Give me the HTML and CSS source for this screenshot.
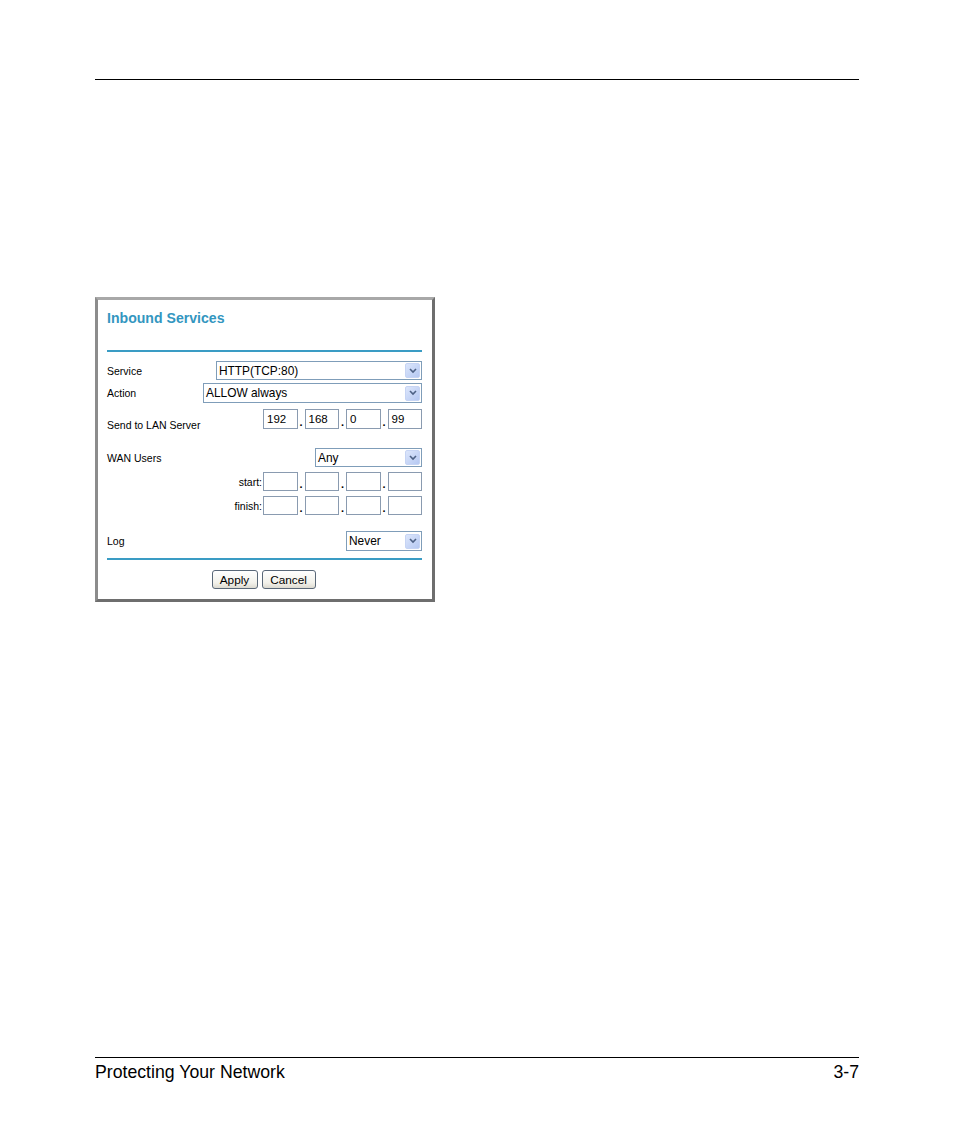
FILE: index.html
```html
<!DOCTYPE html>
<html>
<head>
<meta charset="utf-8">
<link rel="stylesheet" href="styles.css">
</head>
<body>
<div class="page">
  <div class="top-rule"></div>
  <div class="figure">
    <div class="frame">
      <div class="title">Inbound Services</div>
      <div class="rule rule-top"></div>

      <div class="row r-service">
        <span class="label">Service</span>
        <div class="select w-service"><span>HTTP(TCP:80)</span><i class="arrow"><svg viewBox="0 0 8 6" width="8" height="6"><path d="M1 1 L4 4 L7 1" fill="none" stroke="#4d6185" stroke-width="1.6"/></svg></i></div>
      </div>
      <div class="row r-action">
        <span class="label">Action</span>
        <div class="select w-action"><span>ALLOW always</span><i class="arrow"><svg viewBox="0 0 8 6" width="8" height="6"><path d="M1 1 L4 4 L7 1" fill="none" stroke="#4d6185" stroke-width="1.6"/></svg></i></div>
      </div>
      <div class="row r-lan">
        <span class="label label-low">Send to LAN Server</span>
        <div class="ip">
          <span class="oct">192</span><span class="dot">.</span><span class="oct">168</span><span class="dot">.</span><span class="oct">0</span><span class="dot">.</span><span class="oct">99</span>
        </div>
      </div>
      <div class="row r-wan">
        <span class="label">WAN Users</span>
        <div class="select w-wan"><span>Any</span><i class="arrow"><svg viewBox="0 0 8 6" width="8" height="6"><path d="M1 1 L4 4 L7 1" fill="none" stroke="#4d6185" stroke-width="1.6"/></svg></i></div>
      </div>
      <div class="row r-start">
        <span class="sublabel">start:</span>
        <div class="ip">
          <span class="oct"></span><span class="dot">.</span><span class="oct"></span><span class="dot">.</span><span class="oct"></span><span class="dot">.</span><span class="oct"></span>
        </div>
      </div>
      <div class="row r-finish">
        <span class="sublabel">finish:</span>
        <div class="ip">
          <span class="oct"></span><span class="dot">.</span><span class="oct"></span><span class="dot">.</span><span class="oct"></span><span class="dot">.</span><span class="oct"></span>
        </div>
      </div>
      <div class="row r-log">
        <span class="label">Log</span>
        <div class="select w-log"><span>Never</span><i class="arrow"><svg viewBox="0 0 8 6" width="8" height="6"><path d="M1 1 L4 4 L7 1" fill="none" stroke="#4d6185" stroke-width="1.6"/></svg></i></div>
      </div>
      <div class="rule rule-bottom"></div>
      <div class="buttons">
        <span class="btn b-apply">Apply</span>
        <span class="btn b-cancel">Cancel</span>
      </div>
    </div>
  </div>
  <div class="spacer"></div>
  <div class="footer">
    <span>Protecting Your Network</span>
    <span>3-7</span>
  </div>
</div>
</body>
</html>
```

FILE: styles.css
```css
html, body {
  margin: 0;
  padding: 0;
  background: #fff;
}
body {
  width: 954px;
  height: 1145px;
  overflow: hidden;
  font-family: "Liberation Sans", Arial, sans-serif;
  color: #000;
}
.page {
  width: 764px;
  margin-left: 95px;
  height: 1145px;
  display: flex;
  flex-direction: column;
}
.top-rule {
  margin-top: 79px;
  height: 0;
  border-top: 1px solid #000;
}
.figure {
  margin-top: 217px;
}
.frame {
  box-sizing: border-box;
  width: 340px;
  height: 305px;
  border-style: solid;
  border-width: 3px;
  border-color: #a8a8a8 #6e6e6e #6e6e6e #8c8c8c;
  background: #fff;
  padding: 0 10px 0 9px;
  display: flex;
  flex-direction: column;
  font-size: 10.5px;
}
.title {
  margin-top: 10px;
  height: 16px;
  line-height: 16px;
  font-size: 14.1px;
  font-weight: bold;
  color: #3396bf;
}
.rule {
  height: 2px;
  background: #3a9cc4;
}
.rule-top { margin-top: 24px; }
.rule-bottom { margin-top: 7px; }

.row {
  display: flex;
  justify-content: space-between;
  align-items: center;
}
.label { white-space: nowrap; }
.label-low { align-self: flex-end; line-height: 12px; margin-bottom: -2px; }
.sublabel {
  flex: 1;
  text-align: right;
  padding-right: 1px;
}
.r-service { margin-top: 9px; height: 19px; }
.r-action { margin-top: 3px; height: 20px; }
.r-lan { margin-top: 6px; height: 20px; }
.r-wan { margin-top: 19px; height: 19px; }
.r-start { margin-top: 5px; height: 19px; }
.r-finish { margin-top: 5px; height: 19px; }
.r-log { margin-top: 16px; height: 20px; }

.select {
  box-sizing: border-box;
  height: 100%;
  border: 1px solid #7f9db9;
  display: flex;
  align-items: center;
  justify-content: space-between;
  padding: 0 1px 0 2px;
  font-size: 11.9px;
  background: #fff;
}
.w-service { width: 206px; }
.w-action { width: 219px; }
.w-wan { width: 107px; }
.w-log { width: 76px; }
.arrow {
  box-sizing: border-box;
  width: 15px;
  height: 15px;
  background: linear-gradient(135deg, #dce6fb, #b5c8f2);
  border: 1px solid #c6d4f4;
  border-radius: 2px;
  display: flex;
  align-items: center;
  justify-content: center;
}
.ip {
  display: flex;
  align-items: flex-end;
  height: 100%;
}
.oct {
  box-sizing: border-box;
  width: 34.5px;
  height: 100%;
  border: 1px solid #8a9bb0;
  padding-left: 3px;
  font-size: 11.5px;
  display: flex;
  align-items: center;
}
.dot {
  width: 7px;
  text-align: center;
  font-size: 11px;
  line-height: 14px;
  font-weight: bold;
}
.buttons {
  margin-top: 10px;
  display: flex;
  justify-content: center;
  gap: 4px;
  padding-right: 2px;
}
.btn {
  box-sizing: border-box;
  height: 19px;
  border: 1px solid #5a6878;
  border-radius: 3px;
  background: linear-gradient(#ffffff, #f2f1ea 70%, #dcdad0);
  font-size: 11.8px;
  display: flex;
  align-items: center;
  justify-content: center;
}
.b-apply { width: 46px; }
.b-cancel { width: 54px; }

.spacer { flex: 1; }
.footer {
  border-top: 1px solid #000;
  margin-bottom: 63px;
  padding-top: 4px;
  display: flex;
  justify-content: space-between;
  font-size: 17.7px;
  line-height: 20px;
}
```
